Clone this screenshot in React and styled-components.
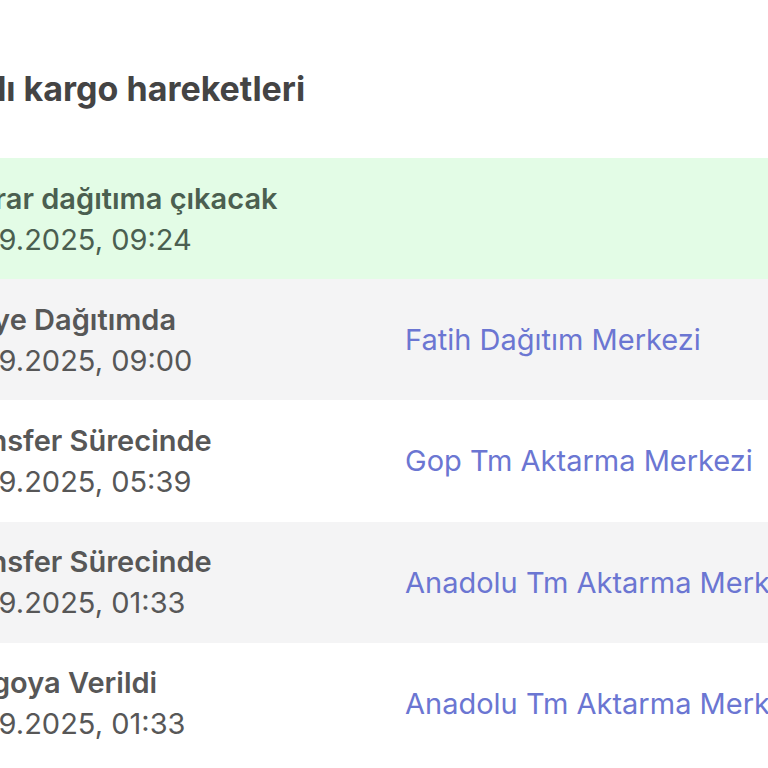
import React from "react";
import styled, { createGlobalStyle } from "styled-components";

const Global = createGlobalStyle`
  html, body { margin: 0; padding: 0; background: #ffffff; overflow: hidden; }
  body { font-family: Inter, "Noto Sans", "Liberation Sans", sans-serif; }
`;

const Page = styled.div`
  width: 940px;
  margin-left: -56px;
`;

const Title = styled.h2`
  margin: 0 0 0 -44px;
  padding: 71px 0 51px 0;
  font-size: 34px;
  line-height: 36px;
  font-weight: 700;
  color: #444444;
  white-space: nowrap;
`;

const List = styled.div`
  display: flex;
  flex-direction: column;
`;

const Row = styled.div`
  display: grid;
  grid-template-columns: 461px 1fr;
  align-items: center;
  padding: 19.6px 0;
  background: ${(p) => (p.$tone === "green" ? "#e3fce6" : p.$tone === "gray" ? "#f4f4f5" : "#ffffff")};
  color: ${(p) => (p.$tone === "green" ? "#4b5f50" : "#575757")};
`;

const Info = styled.div`
  display: flex;
  flex-direction: column;
  white-space: nowrap;
`;

const Status = styled.div`
  font-size: 29px;
  line-height: 41px;
  font-weight: 600;
`;

const Stamp = styled.div`
  font-size: 29px;
  line-height: 41px;
  font-weight: 400;
`;

const Place = styled.div`
  font-size: 29px;
  line-height: 41px;
  color: #6b76d2;
  white-space: nowrap;
`;

const events = [
  { status: "Tekrar dağıtıma çıkacak", date: "15.09.2025, 09:24", place: "", tone: "green" },
  { status: "İlçeye Dağıtımda", date: "15.09.2025, 09:00", place: "Fatih Dağıtım Merkezi", tone: "gray" },
  { status: "Transfer Sürecinde", date: "15.09.2025, 05:39", place: "Gop Tm Aktarma Merkezi", tone: "white" },
  { status: "Transfer Sürecinde", date: "15.09.2025, 01:33", place: "Anadolu Tm Aktarma Merkezi", tone: "gray" },
  { status: "Kargoya Verildi", date: "15.09.2025, 01:33", place: "Anadolu Tm Aktarma Merkezi", tone: "white" },
];

export default function App() {
  return (
    <>
      <Global />
      <Page>
        <Title>Detaylı kargo hareketleri</Title>
        <List>
          {events.map((e, i) => (
            <Row key={i} $tone={e.tone}>
              <Info>
                <Status>{e.status}</Status>
                <Stamp>{e.date}</Stamp>
              </Info>
              <Place>{e.place}</Place>
            </Row>
          ))}
        </List>
      </Page>
    </>
  );
}
